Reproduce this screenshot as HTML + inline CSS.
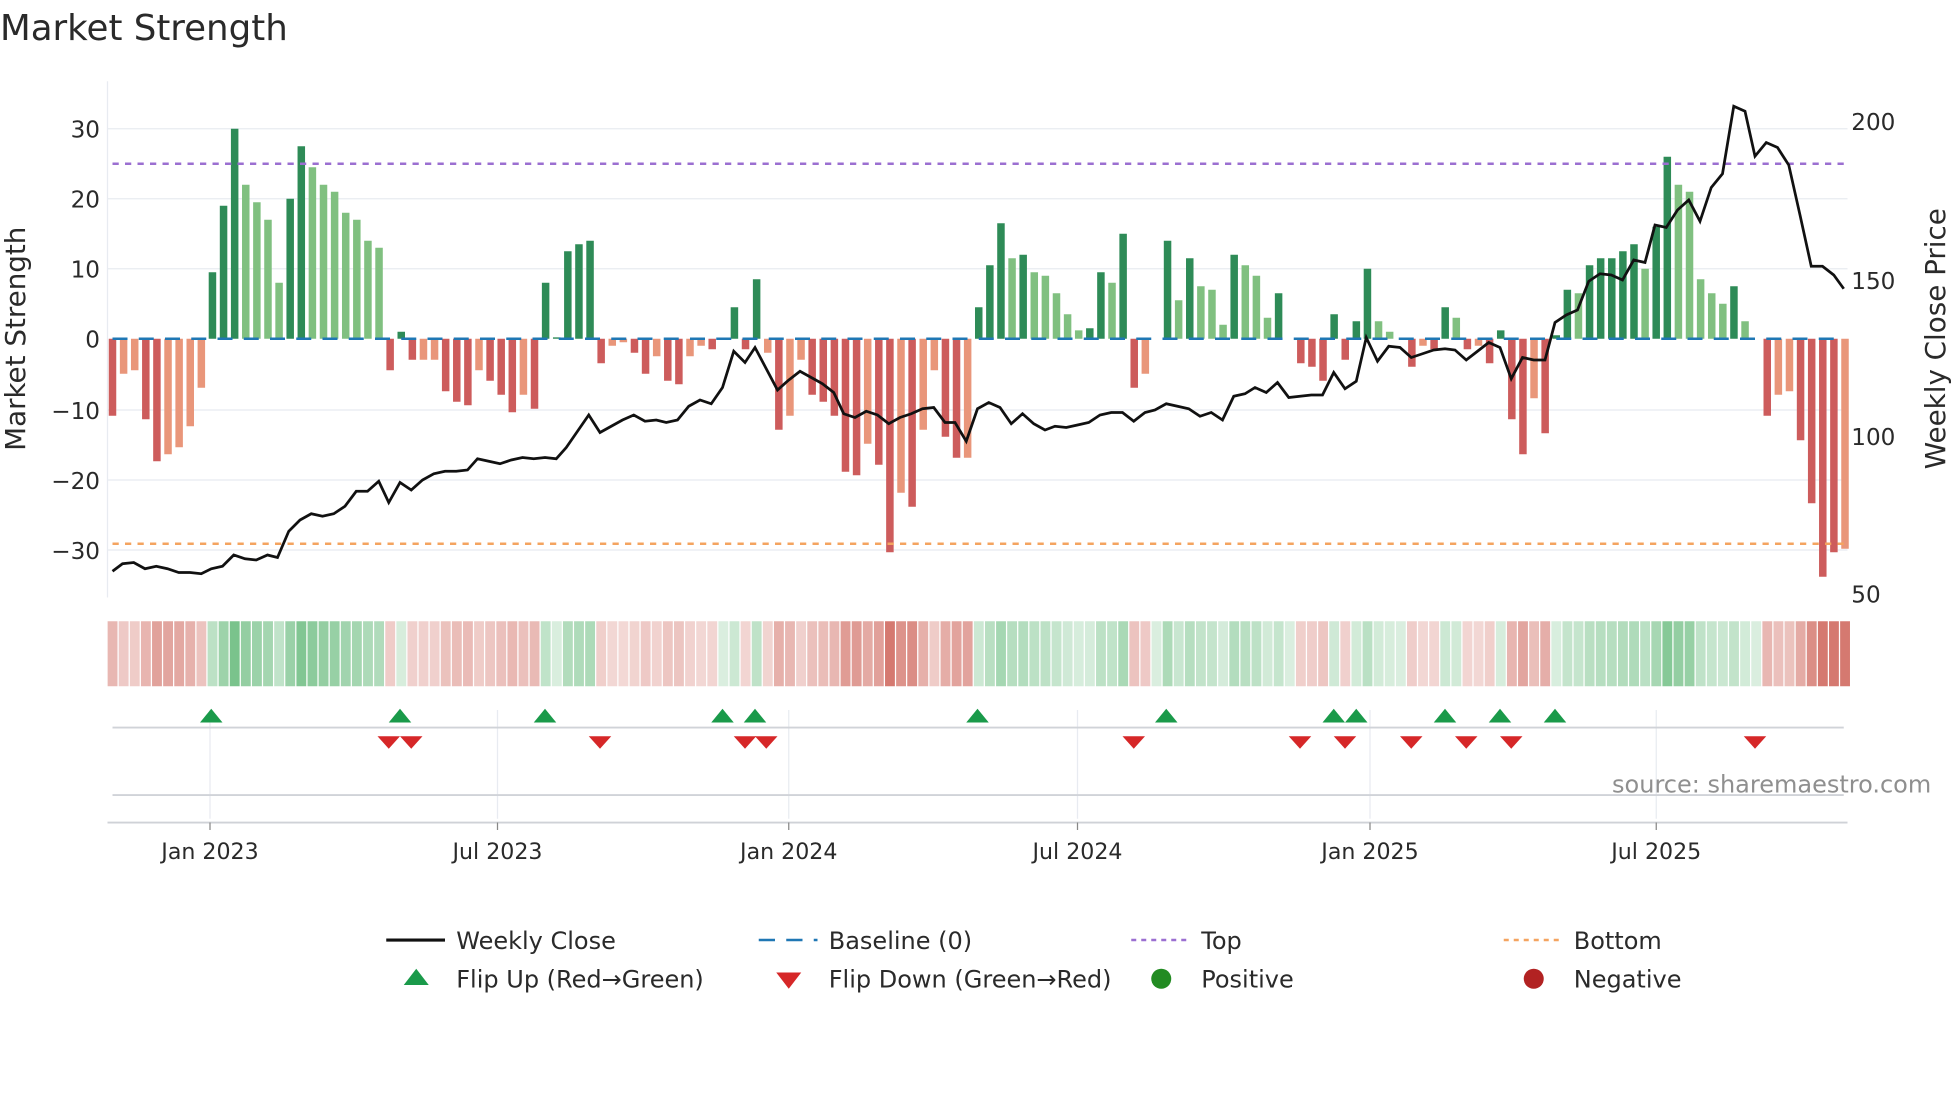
<!DOCTYPE html>
<html><head><meta charset="utf-8">
<style>
html,body{margin:0;padding:0;background:#fff;width:1960px;height:1102px;overflow:hidden}
svg{display:block}
text{font-family:"DejaVu Sans","Liberation Sans",sans-serif;fill:#2a2a2a}
</style></head><body>
<svg id="s" width="1960" height="1102" viewBox="0 0 1568 881.6" preserveAspectRatio="none" xmlns="http://www.w3.org/2000/svg">
<text x="0" y="32" font-size="28.5" fill="#333">Market Strength</text>
<g id="grid" stroke="#e8ebf1" stroke-width="1">
<line x1="86" x2="1478" y1="103" y2="103"/><line x1="86" x2="1478" y1="159" y2="159"/>
<line x1="86" x2="1478" y1="215" y2="215"/><line x1="86" x2="1478" y1="328" y2="328"/>
<line x1="86" x2="1478" y1="384" y2="384"/><line x1="86" x2="1478" y1="440" y2="440"/>
<line x1="86" x2="86" y1="65" y2="478"/>
</g>
<g id="bars"></g>
<line x1="90" x2="1475" y1="271" y2="271" stroke="#1f77b4" stroke-width="2" stroke-dasharray="12,9"/>
<line x1="90" x2="1475" y1="131" y2="131" stroke="#9b6fd1" stroke-width="2" stroke-dasharray="5,5"/>
<line x1="90" x2="1475" y1="435" y2="435" stroke="#f4a460" stroke-width="2" stroke-dasharray="5,5"/>
<polyline id="price" fill="none" stroke="#111" stroke-width="2.2"/>
<g font-size="18.5" text-anchor="end">
<text x="80" y="110">30</text><text x="80" y="166">20</text><text x="80" y="222">10</text>
<text x="80" y="278">0</text><text x="80" y="335">−10</text><text x="80" y="391">−20</text><text x="80" y="447">−30</text>
</g>
<g font-size="18.5">
<text x="1481" y="104">200</text><text x="1481" y="231">150</text><text x="1481" y="356">100</text><text x="1481" y="482">50</text>
</g>
<text transform="translate(20,271) rotate(-90)" font-size="22.2" text-anchor="middle">Market Strength</text>
<text transform="translate(1556,271) rotate(-90)" font-size="22.2" text-anchor="middle">Weekly Close Price</text>
<g id="heat"></g>
<g stroke="#e8ebf1" stroke-width="1">
<line x1="168" x2="168" y1="568" y2="655"/><line x1="398" x2="398" y1="568" y2="655"/>
<line x1="631" x2="631" y1="568" y2="655"/><line x1="862" x2="862" y1="568" y2="655"/>
<line x1="1096" x2="1096" y1="568" y2="655"/><line x1="1325" x2="1325" y1="568" y2="655"/>
</g>
<line x1="90" x2="1475" y1="582" y2="582" stroke="#d0d3d8" stroke-width="1.5"/>
<line x1="90" x2="1475" y1="636" y2="636" stroke="#d0d3d8" stroke-width="1.5"/>
<line x1="86" x2="1478" y1="658" y2="658" stroke="#cfd2d7" stroke-width="1.5"/>
<g stroke="#888" stroke-width="1">
<line x1="168" x2="168" y1="658" y2="664"/><line x1="398" x2="398" y1="658" y2="664"/>
<line x1="631" x2="631" y1="658" y2="664"/><line x1="862" x2="862" y1="658" y2="664"/>
<line x1="1096" x2="1096" y1="658" y2="664"/><line x1="1325" x2="1325" y1="658" y2="664"/>
</g>
<g id="marks"></g>
<g font-size="17.7" text-anchor="middle">
<text x="168" y="687">Jan 2023</text><text x="398" y="687">Jul 2023</text><text x="631" y="687">Jan 2024</text>
<text x="862" y="687">Jul 2024</text><text x="1096" y="687">Jan 2025</text><text x="1325" y="687">Jul 2025</text>
</g>
<text x="1545" y="634" font-size="19.2" text-anchor="end" style="fill:#8f8f8f">source: sharemaestro.com</text>
<g font-size="19.2">
<line x1="309" x2="356" y1="752" y2="752" stroke="#111" stroke-width="2.5"/><text x="365" y="759">Weekly Close</text>
<line x1="607" x2="654" y1="752" y2="752" stroke="#1f77b4" stroke-width="2" stroke-dasharray="13,9"/><text x="663" y="759">Baseline (0)</text>
<line x1="905" x2="950" y1="752" y2="752" stroke="#9b6fd1" stroke-width="2" stroke-dasharray="4,4"/><text x="961" y="759">Top</text>
<line x1="1203" x2="1248" y1="752" y2="752" stroke="#f4a460" stroke-width="2" stroke-dasharray="4,4"/><text x="1259" y="759">Bottom</text>
<polygon points="323,788 343,788 333,775" fill="#1a9a4a"/><text x="365" y="790">Flip Up (Red→Green)</text>
<polygon points="621,778 641,778 631,791" fill="#d62728"/><text x="663" y="790">Flip Down (Green→Red)</text>
<circle cx="929" cy="783" r="8" fill="#228b22"/><text x="961" y="790">Positive</text>
<circle cx="1227" cy="783" r="8" fill="#b22222"/><text x="1259" y="790">Negative</text>
</g>
</svg>
<script>
var V=[[-11,1],[-5,0],[-4.5,0],[-11.5,1],[-17.5,1],[-16.5,0],[-15.5,0],[-12.5,0],[-7,0],[9.5,1],[19,1],[30,1],[22,0],[19.5,0],[17,0],[8,0],[20,1],[27.5,1],[24.5,0],[22,0],[21,0],[18,0],[17,0],[14,0],[13,0],[-4.5,1],[1,1],[-3,1],[-3,0],[-3,0],[-7.5,1],[-9,1],[-9.5,1],[-4.5,0],[-6,1],[-8,1],[-10.5,1],[-8,0],[-10,1],[8,1],[0.2,1],[12.5,1],[13.5,1],[14,1],[-3.5,1],[-1,0],[-0.5,0],[-2,1],[-5,1],[-2.5,0],[-6,1],[-6.5,1],[-2.5,0],[-1,0],[-1.5,1],[0,0],[4.5,1],[-1.5,1],[8.5,1],[-2,0],[-13,1],[-11,0],[-3,0],[-8,1],[-9,1],[-11,1],[-19,1],[-19.5,1],[-15,0],[-18,1],[-30.5,1],[-22,0],[-24,1],[-13,0],[-4.5,0],[-14,1],[-17,1],[-17,0],[4.5,1],[10.5,1],[16.5,1],[11.5,0],[12,1],[9.5,0],[9,0],[6.5,0],[3.5,0],[1.2,0],[1.5,1],[9.5,1],[8,0],[15,1],[-7,1],[-5,0],[0,0],[14,1],[5.5,0],[11.5,1],[7.5,0],[7,0],[2,0],[12,1],[10.5,0],[9,0],[3,0],[6.5,1],[0,0],[-3.5,1],[-4,1],[-6,1],[3.5,1],[-3,1],[2.5,1],[10,1],[2.5,0],[1,0],[0,0],[-4,1],[-1,0],[-1.5,1],[4.5,1],[3,0],[-1.5,1],[-1,0],[-3.5,1],[1.2,1],[-11.5,1],[-16.5,1],[-8.5,0],[-13.5,1],[0.5,1],[7,1],[6.5,0],[10.5,1],[11.5,1],[11.5,1],[12.5,1],[13.5,1],[10,0],[16,1],[26,1],[22,0],[21,0],[8.5,0],[6.5,0],[5,0],[7.5,1],[2.5,0],[0,0],[-11,1],[-8,0],[-7.5,0],[-14.5,1],[-23.5,1],[-34,1],[-30.5,1],[-30,0]];
var NS="http://www.w3.org/2000/svg",n=V.length,step=(1476-90)/(n-1);
function el(t,a,p){var e=document.createElementNS(NS,t);for(var k in a)e.setAttribute(k,a[k]);p.appendChild(e);}
var bars=document.getElementById('bars'),heat=document.getElementById('heat');
V.forEach(function(d,i){var x=90+i*step,v=d[0],h=Math.abs(v)*5.6,c;
 if(v>=0)c=d[1]?'#2e8b57':'#80c080';else c=d[1]?'#cd5c5c':'#e9967a';
 if(h>0.3)el('rect',{x:x-3,y:v>=0?271-h:271,width:6,height:h,fill:c},bars);
 var a=0.25+Math.min(Math.abs(v),30)/30*0.65;
 el('rect',{x:x-4.4+0.5,y:497,width:step-1,height:52,fill:v>=0?'#3aa655':'#c0392b','fill-opacity':a*0.75},heat);
});
var P="90,457 98,451 107,450 116,455 125,453 134,455 143,458 152,458 161,459 169,455 178,453 187,444 196,447 205,448 214,444 222,446 231,425 240,416 249,411 258,413 267,411 276,405 285,393 294,393 303,385 311,402 320,386 329,392 338,384 347,379 356,377 365,377 374,376 382,367 391,369 400,371 409,368 418,366 427,367 436,366 445,367 453,358 462,345 471,332 480,346 489,341 498,336 507,332 516,337 525,336 533,338 542,336 551,325 560,320 569,323 578,310 587,281 596,290 604,278 613,295 622,312 631,304 640,297 649,302 658,307 667,314 675,331 684,334 693,329 702,332 711,339 720,334 729,331 738,327 747,326 756,338 764,338 773,353 782,327 791,322 800,326 809,339 818,331 827,339 836,344 844,341 853,342 862,340 871,338 880,332 889,330 898,330 907,337 916,330 924,328 933,323 942,325 951,327 960,333 969,330 978,336 987,317 996,315 1004,310 1013,314 1022,306 1031,318 1040,317 1049,316 1058,316 1067,298 1076,311 1085,305 1093,270 1102,289 1111,277 1120,278 1129,286 1138,283 1147,280 1156,279 1164,280 1173,288 1182,281 1191,274 1200,278 1209,303 1218,286 1227,288 1236,288 1244,258 1253,252 1262,248 1271,225 1280,219 1289,220 1298,224 1307,208 1316,210 1324,180 1333,182 1342,168 1351,160 1360,177 1369,150 1378,139 1387,85 1396,89 1404,125 1413,114 1422,118 1431,132 1440,172 1449,213 1458,213 1467,220 1475,231";
document.getElementById('price').setAttribute('points',P);
var m=document.getElementById('marks');
[169,320,436,578,604,782,933,1067,1085,1156,1200,1244].forEach(function(x){el('polygon',{points:(x-9)+',578 '+(x+9)+',578 '+x+',567',fill:'#1a9a4a'},m);});
[311,329,480,596,613,907,1040,1076,1129,1173,1209,1404].forEach(function(x){el('polygon',{points:(x-9)+',589 '+(x+9)+',589 '+x+',599',fill:'#d62728'},m);});
</script>
</body></html>
